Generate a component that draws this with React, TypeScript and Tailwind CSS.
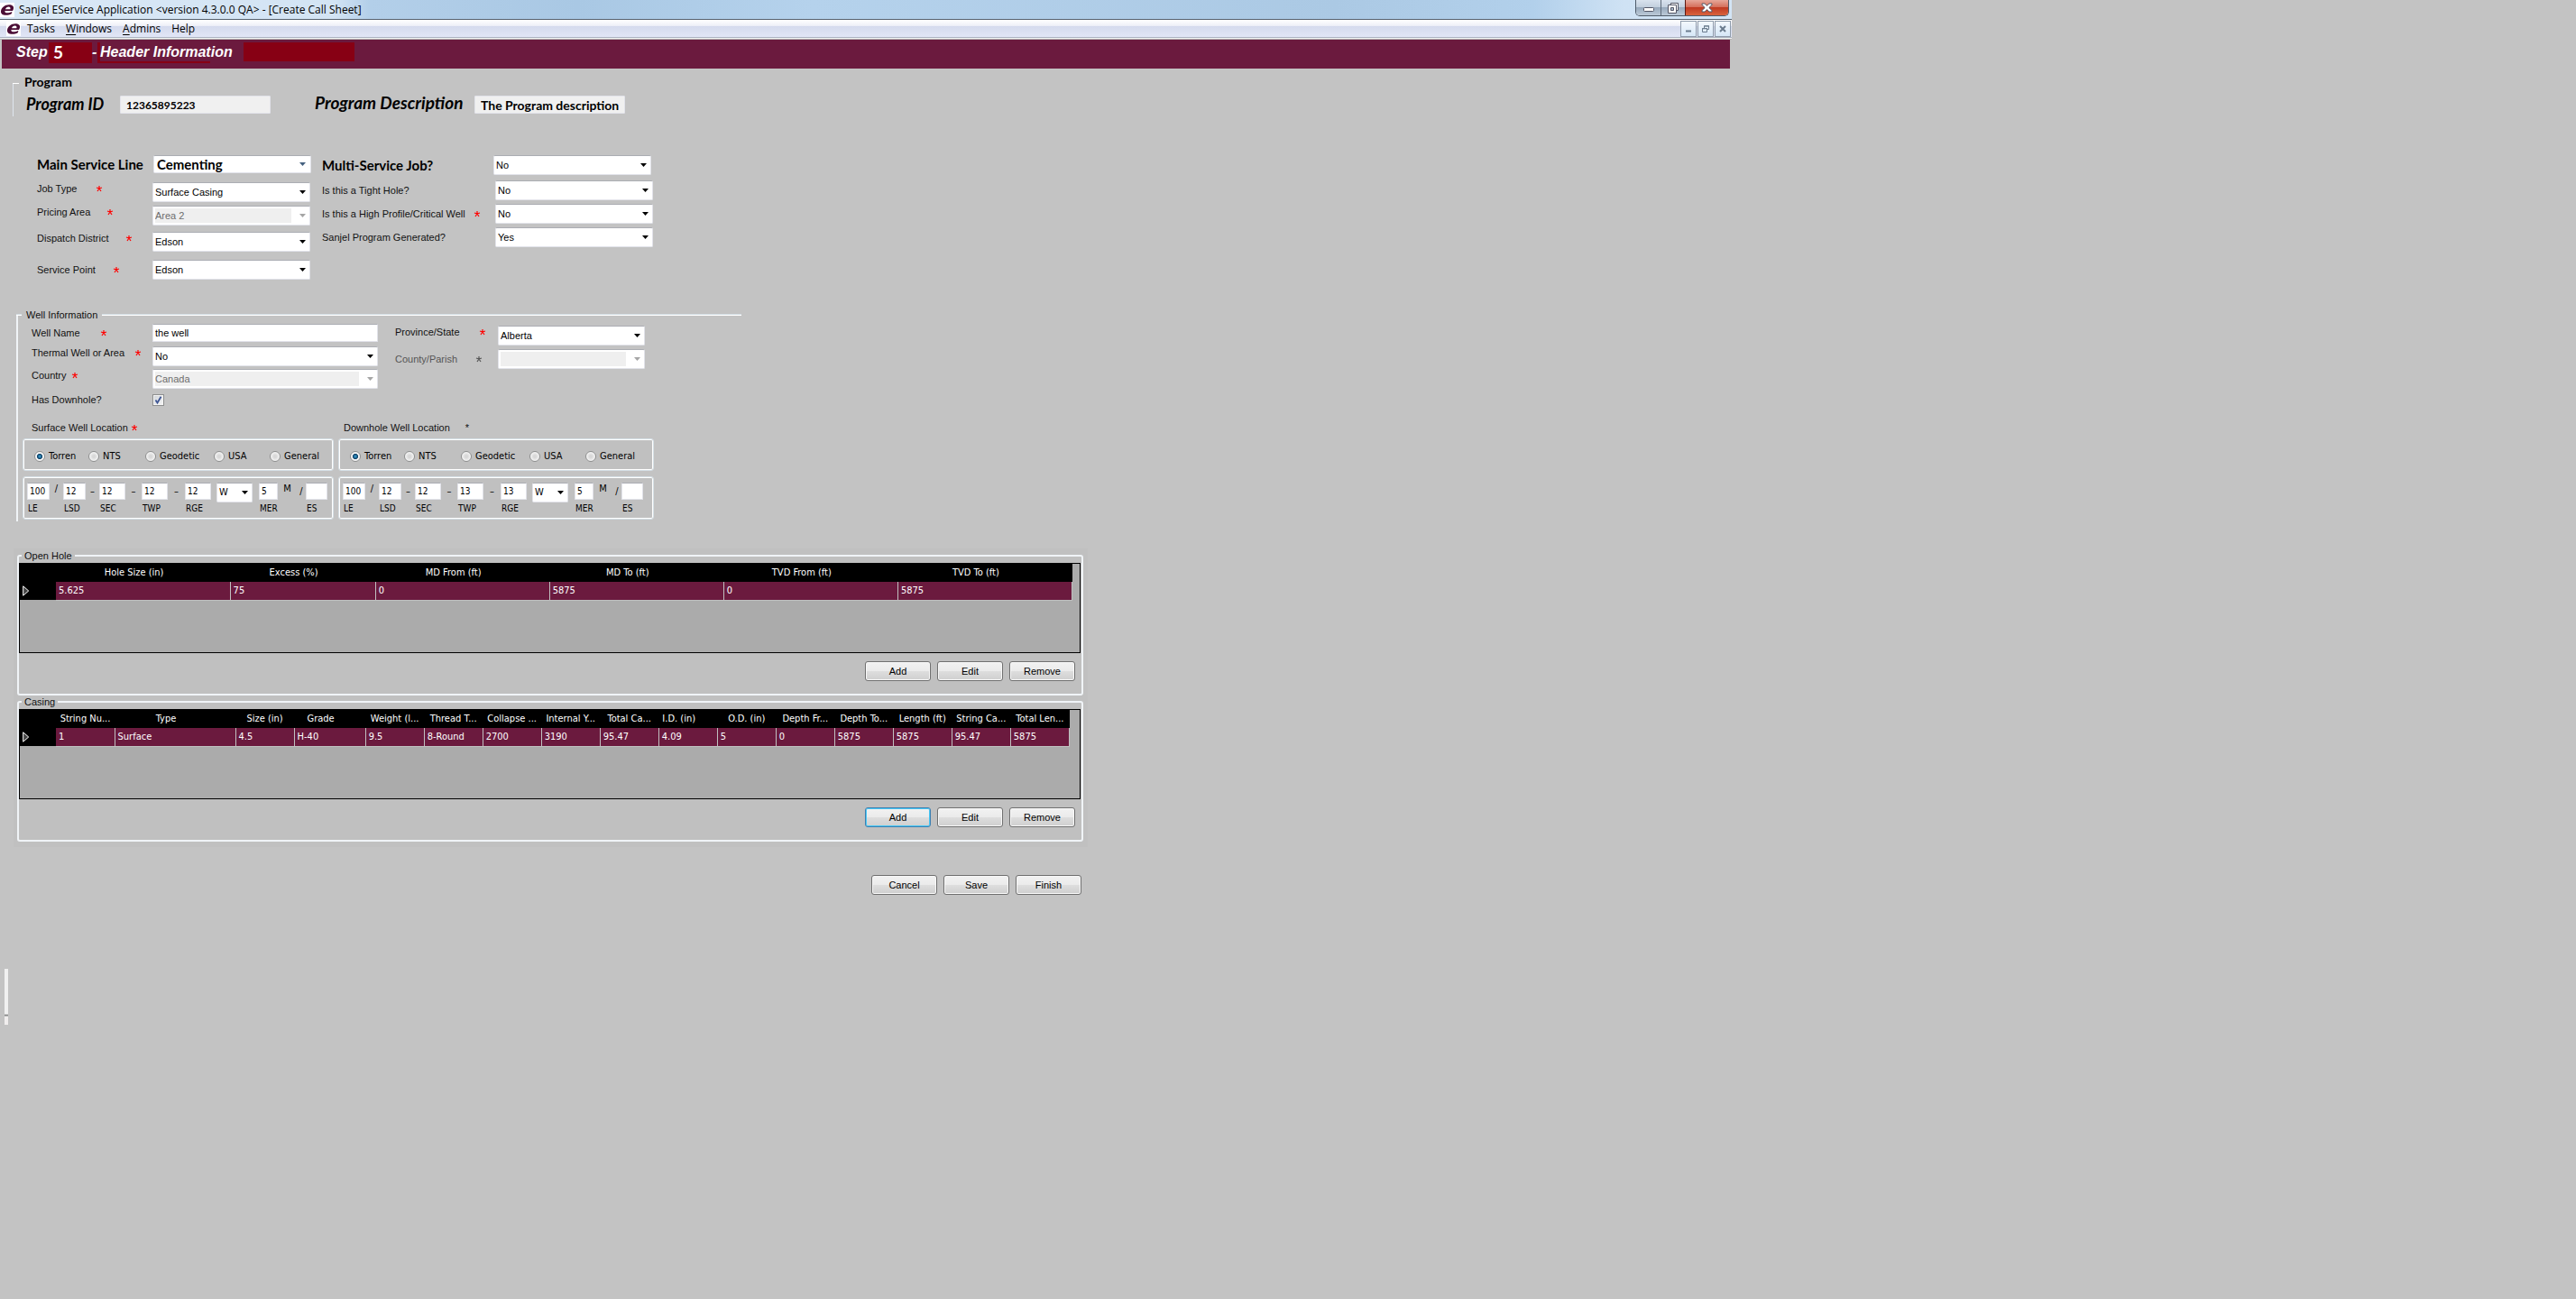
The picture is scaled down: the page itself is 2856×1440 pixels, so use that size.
import React, { useId } from 'react';

const UI = "font-['DejaVu_Sans_Condensed','DejaVu_Sans',sans-serif]";

function Logo() {
  return (
    <span className="flex h-4 w-4 shrink-0 items-center justify-center bg-white">
      <svg viewBox="0 0 16 16" className="h-4 w-4" aria-hidden="true">
        <path
          fill="#4a0d35"
          fillRule="evenodd"
          d="M1 9.500C1.300 5.600 5.200 2.300 10 2.300C13.600 2.300 15.500 4 15 6.500C14.800 7.600 14.400 8.400 14 9H5.400C5.200 10.600 6.200 11.300 8 11.300C9.800 11.300 11.400 10.800 13.400 9.900L12.800 12.300C11 13.300 8.800 13.800 6.400 13.800C2.800 13.800 .8 12.200 1 9.500ZM6 7.200H11.400C11.800 5.600 11.200 4.600 9.600 4.600C7.900 4.600 6.600 5.600 6 7.200Z"
        />
      </svg>
    </span>
  );
}

function Star({ className = 'text-[#ff0000]' }: { className?: string }) {
  return (
    <svg viewBox="0 0 8 8" className={'h-2 w-2 shrink-0 ' + className} stroke="currentColor" strokeWidth="1.2" aria-hidden="true">
      <path d="M4 1V4M4 4L1 3M4 4L7 3M4 4L2 7M4 4L6 7" />
    </svg>
  );
}

type SelectProps = {
  id: string;
  value: string;
  label?: string;
  disabled?: boolean;
  big?: boolean;
  className: string;
};

function Select({ id, value, label, disabled, big, className }: SelectProps) {
  return (
    <span className={'relative block shrink-0 self-start ' + className}>
      <select
        id={id}
        aria-label={label}
        disabled={disabled}
        defaultValue={value}
        className={
          'block w-full appearance-none rounded-[2px] border border-[#e2e3ea] border-t-[#abadb3] bg-white pr-5 ' +
          (big ? "h-5 pl-[3px] font-['Lato',sans-serif] text-[15px] leading-[18px] font-bold text-black " : 'h-[22px] pl-0.5 text-[11px] leading-[18px] ') +
          (disabled
            ? 'border-[#afafaf] bg-[linear-gradient(#efefef,#efefef)] bg-[length:calc(100%_-_22px)_16px] bg-[position:2px_2px] bg-no-repeat text-[#6d6d6d] opacity-100'
            : 'text-black')
        }
      >
        <option>{value}</option>
      </select>
      <svg
        viewBox="0 0 7 4"
        className={
          'pointer-events-none absolute top-1/2 -mt-0.5 h-1 w-[7px] ' +
          (big ? 'right-[6px] text-[#44607f]' : disabled ? 'right-[5px] text-[#a5a5a5]' : 'right-[5px] text-black')
        }
        fill="currentColor"
        aria-hidden="true"
      >
        <path d="M0 0H7L3.5 4Z" />
      </svg>
    </span>
  );
}

type FieldProps = {
  label: string;
  value: string;
  star?: 'red' | 'gray';
  labelWidth: string;
  textWidth?: string;
  selectWidth: string;
  align?: string;
  disabled?: boolean;
  dim?: boolean;
};

function SelectField({ label, value, star, labelWidth, textWidth = '', selectWidth, align = 'items-start', disabled, dim }: FieldProps) {
  const id = useId();
  return (
    <div className={'flex ' + align}>
      <label
        htmlFor={id}
        className={'flex shrink-0 items-center text-[11px] leading-[14px] whitespace-nowrap ' + labelWidth + (dim ? ' text-[#555]' : ' text-[#111]')}
      >
        <span className={textWidth}>{label}</span>
        {star && <Star className={star === 'red' ? 'text-[#ff0000]' : 'text-[#555]'} />}
      </label>
      <Select id={id} value={value} disabled={disabled} className={selectWidth} />
    </div>
  );
}

function TitleButtons() {
  return (
    <div className="mr-[3px] flex h-[18px] overflow-hidden rounded-b-[5px] border border-t-0 border-[#4f5b69]">
      <button type="button" aria-label="Minimize" className="flex w-7 items-center justify-center border-r border-[#5d6a79] bg-[linear-gradient(#d9e3ee_0%,#c3d0de_45%,#98aabd_50%,#bccad8_100%)]">
        <svg viewBox="0 0 12 5" className="mt-1 h-[5px] w-3" aria-hidden="true">
          <rect x=".5" y=".5" width="11" height="4" rx="1" fill="#fff" stroke="#535666" />
        </svg>
      </button>
      <button type="button" aria-label="Restore" className="flex w-[27px] items-center justify-center border-r border-[#5b1a14] bg-[linear-gradient(#d9e3ee_0%,#c3d0de_45%,#98aabd_50%,#bccad8_100%)]">
        <svg viewBox="0 0 12 12" className="h-3 w-3" fill="#fff" stroke="#535666" aria-hidden="true">
          <path d="M3.5 .5h8v8h-8z" />
          <path d="M.5 2.5h9v9h-9z" />
          <path d="M3.5 5.5h3v3h-3z" fill="#a9b8c8" />
        </svg>
      </button>
      <button type="button" aria-label="Close" className="flex w-[47px] items-center justify-center bg-[linear-gradient(#e6a799_0%,#d5705c_45%,#c03a22_50%,#d8643f_100%)]">
        <svg viewBox="0 0 13 11" className="h-[11px] w-[13px]" aria-hidden="true">
          <path d="M1 1h3.2L6.5 3.4 8.8 1H12v1.4L8.8 5.5 12 8.6V10H8.8L6.5 7.6 4.2 10H1V8.600L4.200 5.500 1 2.400z" fill="#fff" stroke="#535666" />
        </svg>
      </button>
    </div>
  );
}

function ChildButton({ label, children }: { label: string; children: React.ReactNode }) {
  return (
    <button type="button" aria-label={label} className="flex h-[18px] w-[18px] items-center justify-center border border-[#8f9cab] bg-[linear-gradient(#f3f8fd,#d6e7f7)]">
      <svg viewBox="0 0 8 8" className="h-2 w-2" fill="none" stroke="#6b7c8e" aria-hidden="true">
        {children}
      </svg>
    </button>
  );
}

function MenuItem({ first, rest }: { first?: string; rest: string }) {
  return (
    <button type="button" className="text-[12px] leading-[18px] text-black">
      {first && <span className="underline underline-offset-2">{first}</span>}
      {rest}
    </button>
  );
}

function PushButton({ children, focused }: { children: string; focused?: boolean }) {
  return (
    <button
      type="button"
      className={
        'h-[22px] w-[73px] rounded-[3px] border bg-[linear-gradient(#f2f2f2_0%,#ebebeb_48%,#dddddd_52%,#cfcfcf_100%)] text-[11px] leading-none text-black ' +
        (focused ? 'border-[#3c7fb1] shadow-[inset_0_0_0_1px_#47c8f5]' : 'border-[#707070] shadow-[inset_0_0_0_1px_#f8f8f8]')
      }
    >
      {children}
    </button>
  );
}

function BoxField({ caption, value, width }: { caption: string; value: string; width: string }) {
  const id = useId();
  return (
    <div className="flex flex-col gap-[3px]">
      <input
        id={id}
        defaultValue={value}
        className={'h-[19px] rounded-[1px] border border-[#e2e3ea] border-t-[#abadb3] bg-white pl-0.5 text-[10px] text-black ' + width}
      />
      <label htmlFor={id} className="pl-px text-[10px] leading-[14px] text-black">
        {caption}
      </label>
    </div>
  );
}

function Sep({ children, width, high }: { children: string; width: string; high?: boolean }) {
  return <span className={'text-center text-[11px] text-black ' + (high ? 'leading-[13px] ' : 'leading-5 ') + width}>{children}</span>;
}

type LocationProps = {
  title: string;
  star: React.ReactNode;
  name: string;
  twp: string;
  rge: string;
  width: string;
  titlePad: string;
};

function Location({ title, star, name, twp, rge, width, titlePad }: LocationProps) {
  const kinds: [string, string][] = [
    ['Torren', 'w-[60px]'],
    ['NTS', 'w-[63px]'],
    ['Geodetic', 'w-[76px]'],
    ['USA', 'w-[62px]'],
    ['General', 'w-auto'],
  ];
  return (
    <section className={'text-black ' + width}>
      <h3 className={'mb-[5px] flex items-center gap-[3px] text-[11px] leading-[14px] text-[#111] ' + titlePad}>
        {title}
        {star}
      </h3>
      <div role="radiogroup" aria-label={title} className="flex h-9 items-center rounded-[3px] border border-[#d5dfe5] bg-[#c0c0c0] pt-1 pl-3 shadow-[inset_0_0_0_1px_#fff]">
        {kinds.map(([kind, kindWidth], i) => (
          <label key={kind} className={'flex shrink-0 items-center gap-1 text-[11px] leading-[14px] ' + kindWidth + ' ' + UI}>
            <input
              type="radio"
              name={name}
              defaultChecked={i === 0}
              className="h-3 w-3 shrink-0 appearance-none rounded-full border border-[#8e8f8f] bg-[radial-gradient(circle,#d8d8d8_20%,#f6f6f6_70%)] checked:bg-[radial-gradient(circle,#3fa9dc_0,#0d3f66_38%,#f4f4f4_50%)]"
            />
            {kind}
          </label>
        ))}
      </div>
      <div className={'mt-[6px] flex h-12 rounded-[3px] border border-[#d5dfe5] bg-[#c0c0c0] pt-[6px] pl-1 shadow-[inset_0_0_0_1px_#fff] ' + UI}>
        <BoxField caption="LE" value="100" width="w-[25px]" />
        <Sep width="w-[15px]" high>
          /
        </Sep>
        <BoxField caption="LSD" value="12" width="w-[25px]" />
        <Sep width="w-[15px]">–</Sep>
        <BoxField caption="SEC" value="12" width="w-[29px]" />
        <Sep width="w-[18px]">–</Sep>
        <BoxField caption="TWP" value={twp} width="w-[29px]" />
        <Sep width="w-[19px]">–</Sep>
        <BoxField caption="RGE" value={rge} width="w-[29px]" />
        <Select id={name + '-dir'} label="Direction" value="W" className="ml-[6px] w-10" />
        <span className="w-[7px]" />
        <BoxField caption="MER" value="5" width="w-[21px]" />
        <Sep width="w-[21px]" high>
          M
        </Sep>
        <Sep width="w-[10px]">/</Sep>
        <BoxField caption="ES" value="" width="w-6" />
      </div>
    </section>
  );
}

type Column = { head: string; value: string; width: string; roomy?: boolean };

type GridProps = { title: string; columns: Column[]; focusAdd?: boolean; fill: string };

function DataGroup({ title, columns, focusAdd, fill }: GridProps) {
  return (
    <fieldset className="min-w-0 rounded-[3px] border-2 border-[#f0f4f7] pr-px pb-[14px]">
      <legend className="ml-[3px] px-[3px] text-[11px] leading-[14px] text-[#111]">{title}</legend>
      <div className="mt-px h-[100px] border border-black bg-[#ababab]">
        <table className={'table-fixed border-collapse text-[11px] leading-4 text-white ' + fill + ' ' + UI}>
          <colgroup>
            <col className="w-10" />
            {columns.map((c) => (
              <col key={c.head} className={c.width} />
            ))}
          </colgroup>
          <thead>
            <tr className="h-5 bg-black">
              <td className="p-0" />
              {columns.map((c) => (
                <th key={c.head} scope="col" className={'truncate py-0 pl-0 text-center font-normal ' + (c.roomy ? 'pr-5' : 'pr-0')}>
                  {c.head}
                </th>
              ))}
            </tr>
          </thead>
          <tbody>
            <tr className="h-5 bg-[#6b1a3e]">
              <th scope="row" aria-label="Current row" className="bg-black p-0">
                <svg viewBox="0 0 8 12" className="ml-[3px] block h-3 w-2" fill="#444" stroke="#fff" aria-hidden="true">
                  <path d="M.7 .8v10.400l6-5.200z" />
                </svg>
              </th>
              {columns.map((c) => (
                <td key={c.head} className="border-r border-b border-[#c0c0c0] py-0 pr-0 pl-[3px]">
                  {c.value}
                </td>
              ))}
            </tr>
          </tbody>
        </table>
      </div>
      <div className="mt-[9px] flex justify-end gap-[7px] pr-[6px]">
        <PushButton focused={focusAdd}>Add</PushButton>
        <PushButton>Edit</PushButton>
        <PushButton>Remove</PushButton>
      </div>
    </fieldset>
  );
}

const openHole: Column[] = [
  { head: 'Hole Size (in)', value: '5.625', width: 'w-[193px]', roomy: true },
  { head: 'Excess (%)', value: '75', width: 'w-[161px]', roomy: true },
  { head: 'MD From (ft)', value: '0', width: 'w-[193px]', roomy: true },
  { head: 'MD To (ft)', value: '5875', width: 'w-[193px]', roomy: true },
  { head: 'TVD From (ft)', value: '0', width: 'w-[193px]', roomy: true },
  { head: 'TVD To (ft)', value: '5875', width: 'w-[193px]', roomy: true },
];

const casing: Column[] = [
  { head: 'String Nu...', value: '1', width: 'w-[65px]' },
  { head: 'Type', value: 'Surface', width: 'w-[134px]', roomy: true },
  { head: 'Size (in)', value: '4.5', width: 'w-[65px]' },
  { head: 'Grade', value: 'H-40', width: 'w-[79px]', roomy: true },
  { head: 'Weight (l...', value: '9.5', width: 'w-[65px]' },
  { head: 'Thread T...', value: '8-Round', width: 'w-[65px]' },
  { head: 'Collapse ...', value: '2700', width: 'w-[65px]' },
  { head: 'Internal Y...', value: '3190', width: 'w-[65px]' },
  { head: 'Total Ca...', value: '95.47', width: 'w-[65px]' },
  { head: 'I.D. (in)', value: '4.09', width: 'w-[65px]', roomy: true },
  { head: 'O.D. (in)', value: '5', width: 'w-[65px]' },
  { head: 'Depth Fr...', value: '0', width: 'w-[65px]' },
  { head: 'Depth To...', value: '5875', width: 'w-[65px]' },
  { head: 'Length (ft)', value: '5875', width: 'w-[65px]' },
  { head: 'String Ca...', value: '95.47', width: 'w-[65px]' },
  { head: 'Total Len...', value: '5875', width: 'w-[65px]' },
];

export default function App() {
  return (
    <div className="min-h-screen bg-[#c3c3c3] font-['Liberation_Sans',Arial,sans-serif]">
      <div className="w-full max-w-[1920px]">
        <header className="font-['Open_Sans',sans-serif]">
          <div className="flex h-[22px] items-start border-b border-[#56616e] bg-[linear-gradient(90deg,#d9e8f6_0,#d3e4f4_370px,#b3cfe9_410px,#a9c8e4_640px,#b5d2ec_900px,#abc9e4_1480px,#b2d0eb_1700px,#cfe2f4_1800px,#d3e5f6_100%)]">
            <div className="flex grow items-center gap-[5px] pt-0.5">
              <Logo />
              <h1 className="text-[12px] leading-[18px] text-black">Sanjel EService Application &lt;version 4.3.0.0 QA&gt; - [Create Call Sheet]</h1>
            </div>
            <TitleButtons />
          </div>
          <div className="flex h-[19px] items-center bg-[linear-gradient(#ffffff_0%,#eef0f8_34%,#d4daed_36%,#e1e6f6_100%)] pl-[7px]">
            <Logo />
            <nav className="ml-[7px] flex grow gap-3">
              <MenuItem rest="Tasks" />
              <MenuItem first="W" rest="indows" />
              <MenuItem first="A" rest="dmins" />
              <MenuItem rest="Help" />
            </nav>
            <div className="mr-px flex gap-px">
              <ChildButton label="Minimize sheet">
                <path d="M1 6.500h6" strokeWidth="2" />
              </ChildButton>
              <ChildButton label="Restore sheet">
                <path d="M2.500 3V1h5v3.500H6M2 .8h6M.5 3.500h5v4h-5zM0 3.800h6" />
              </ChildButton>
              <ChildButton label="Close sheet">
                <path d="M1 1l6 6M7 1L1 7" strokeWidth="2" />
              </ChildButton>
            </div>
          </div>
          <div className="h-[3px] border-t border-b border-t-[#aab2c0] border-b-[#b5b5b5] bg-[#f2f2f2]" />
        </header>

        <h2 className="mr-0.5 ml-0.5 flex h-8 items-start bg-[#6b1a3e] pt-[3px] pl-4 text-[16px] leading-[21px] font-bold text-white italic">
          <span className="w-9">Step</span>
          <span className="h-[23px] w-12 bg-[#870014] pl-[5px] font-['Lato',sans-serif] text-[19px] leading-[21px] not-italic">5</span>
          <span className="w-[7px]">-</span>
          <span className="relative ml-px w-[160px] pl-px before:absolute before:top-0 before:-left-0.5 before:h-[23px] before:w-[125px] before:border-b-2 before:border-l-[3px] before:border-[#870014]">
            <span className="relative">Header Information</span>
          </span>
          <span className="h-[21px] w-[123px] bg-[#870014]" />
        </h2>

        <main>
          <section className="mt-[7px] ml-[14px] font-['Lato',sans-serif] font-bold text-black">
            <div className="flex items-center">
              <span className="mt-0.5 h-px w-[7px] bg-white" />
              <h3 className="ml-[6px] text-[14px] leading-4">Program</h3>
            </div>
            <div className="-mt-[6px] flex h-9 items-start border-l border-[#dfe6ee] pt-[13px] pl-[14px]">
              <label htmlFor="pid" className="w-[104px] text-[18px] leading-[18px] italic">
                Program ID
              </label>
              <input id="pid" defaultValue="12365895223" className="h-5 w-[167px] rounded-[1px] border border-[#e2e3ea] bg-[#f0f0f0] pl-[6px] text-[12px]" />
              <label htmlFor="pdesc" className="ml-[49px] w-[177px] text-[19px] leading-4 italic">
                Program Description
              </label>
              <input id="pdesc" defaultValue="The Program description" className="h-5 w-[167px] rounded-[1px] border border-[#e2e3ea] bg-[#f0f0f0] pl-[6px] text-[14px]" />
            </div>
          </section>

          <section className="mt-[43px] flex pl-[41px]">
            <div className="flex w-[316px] flex-col">
              <div className="flex items-center">
                <label htmlFor="msl" className="w-[129px] font-['Lato',sans-serif] text-[15px] leading-5 font-bold text-black">
                  Main Service Line
                </label>
                <Select id="msl" value="Cementing" big className="w-[175px]" />
              </div>
              <div className="mt-[10px] flex flex-col gap-1">
                <SelectField label="Job Type" value="Surface Casing" star="red" labelWidth="w-32" textWidth="w-[65px]" selectWidth="w-[175px]" />
                <SelectField label="Pricing Area" value="Area 2" star="red" labelWidth="w-32" textWidth="w-[77px]" selectWidth="w-[175px]" disabled />
              </div>
              <div className="mt-[7px] flex flex-col gap-[9px]">
                <SelectField label="Dispatch District" value="Edson" star="red" labelWidth="w-32" textWidth="w-[98px]" selectWidth="w-[175px]" />
                <SelectField label="Service Point" value="Edson" star="red" labelWidth="w-32" textWidth="w-[84px]" selectWidth="w-[175px]" align="items-center" />
              </div>
            </div>
            <div className="flex flex-col gap-1">
              <div className="mb-0.5 flex items-center">
                <label htmlFor="msj" className="w-[190px] font-['Lato',sans-serif] text-[15px] leading-5 font-bold text-black">
                  Multi-Service Job?
                </label>
                <Select id="msj" value="No" className="w-[175px]" />
              </div>
              <SelectField label="Is this a Tight Hole?" value="No" labelWidth="w-48" selectWidth="w-[175px]" align="items-center" />
              <SelectField label="Is this a High Profile/Critical Well" value="No" star="red" labelWidth="w-48" textWidth="w-[168px]" selectWidth="w-[175px]" align="items-center" />
              <SelectField label="Sanjel Program Generated?" value="Yes" labelWidth="w-48" selectWidth="w-[175px]" align="items-center" />
            </div>
          </section>

          <section className="mt-8 ml-[18px] max-w-[804px]">
            <div className="flex items-center">
              <span className="h-0.5 w-[6px] border-t border-[#d5dfe5] bg-white" />
              <h3 className="px-[5px] text-[11px] leading-[14px] whitespace-nowrap text-[#111]">Well Information</h3>
              <span className="h-0.5 grow border-t border-[#d5dfe5] bg-white" />
            </div>
            <div className="-mt-[6px] border-l-2 border-[#f0f4f7] pt-[9px]">
              <div className="flex pl-[15px]">
                <div className="flex w-[403px] flex-col">
                  <div className="flex items-center">
                    <label htmlFor="well" className="flex w-[134px] items-center text-[11px] leading-[14px] text-[#111]">
                      <span className="w-[76px]">Well Name</span>
                      <Star />
                    </label>
                    <input id="well" defaultValue="the well" className="h-5 w-[250px] rounded-[1px] border border-[#e2e3ea] border-t-[#abadb3] bg-white pl-0.5 text-[11px]" />
                  </div>
                  <div className="mt-[5px] flex flex-col gap-[3px]">
                    <SelectField label="Thermal Well or Area" value="No" star="red" labelWidth="w-[134px]" textWidth="w-[114px]" selectWidth="w-[250px]" />
                    <SelectField label="Country" value="Canada" star="red" labelWidth="w-[134px]" textWidth="w-[44px]" selectWidth="w-[250px]" disabled />
                  </div>
                  <div className="mt-[5px] flex items-center">
                    <label htmlFor="dh" className="w-[134px] text-[11px] leading-[14px] text-[#111]">
                      Has Downhole?
                    </label>
                    <span className="relative block h-[13px] w-[13px]">
                      <input id="dh" type="checkbox" defaultChecked className="block h-[13px] w-[13px] appearance-none border border-[#8e8f8f] bg-[linear-gradient(135deg,#cfd3d9,#f6f6f6)] shadow-[inset_0_0_0_1px_#f4f4f4]" />
                      <svg viewBox="0 0 13 13" className="pointer-events-none absolute inset-0 h-[13px] w-[13px]" fill="none" stroke="#3f5694" strokeWidth="1.800" aria-hidden="true">
                        <path d="M3.500 6.500L5.500 9.500L9.500 2.800" />
                      </svg>
                    </span>
                  </div>
                </div>
                <div className="mt-0.5 flex flex-col gap-1">
                  <SelectField label="Province/State" value="Alberta" star="red" labelWidth="w-[114px]" textWidth="w-[93px]" selectWidth="w-[163px]" />
                  <SelectField label="County/Parish" value="" star="gray" labelWidth="w-[114px]" textWidth="w-[89px]" selectWidth="w-[163px]" align="items-center" disabled dim />
                </div>
              </div>
              <div className="mt-[17px] flex gap-[5px] pb-0.5 pl-[5px]">
                <Location title="Surface Well Location" star={<Star />} name="surface" twp="12" rge="12" width="w-[345px]" titlePad="pl-[10px]" />
                <Location title="Downhole Well Location" star={<span className="ml-[14px]">*</span>} name="downhole" twp="13" rge="13" width="w-[350px]" titlePad="pl-[6px]" />
              </div>
            </div>
          </section>

          <section className="mt-[30px] ml-[15px] max-w-[1191px] bg-[#c0c0c0] pt-px pr-[5px] pb-[6px] pl-1">
            <DataGroup title="Open Hole" columns={openHole} fill="w-[1167px]" />
            <DataGroup title="Casing" columns={casing} focusAdd fill="w-[1164px]" />
          </section>

          <div className="mt-[31px] flex max-w-[1199px] justify-end gap-[7px]">
            <PushButton>Cancel</PushButton>
            <PushButton>Save</PushButton>
            <PushButton>Finish</PushButton>
          </div>

          <div className="mt-[82px] ml-[5px] flex w-1 flex-col">
            <span className="h-[50px] bg-[#f0f0f0]" />
            <span className="mt-px h-px bg-[#8a8a8a]" />
            <span className="mt-px h-[9px] bg-[#f0eded]" />
          </div>
        </main>
      </div>
    </div>
  );
}
